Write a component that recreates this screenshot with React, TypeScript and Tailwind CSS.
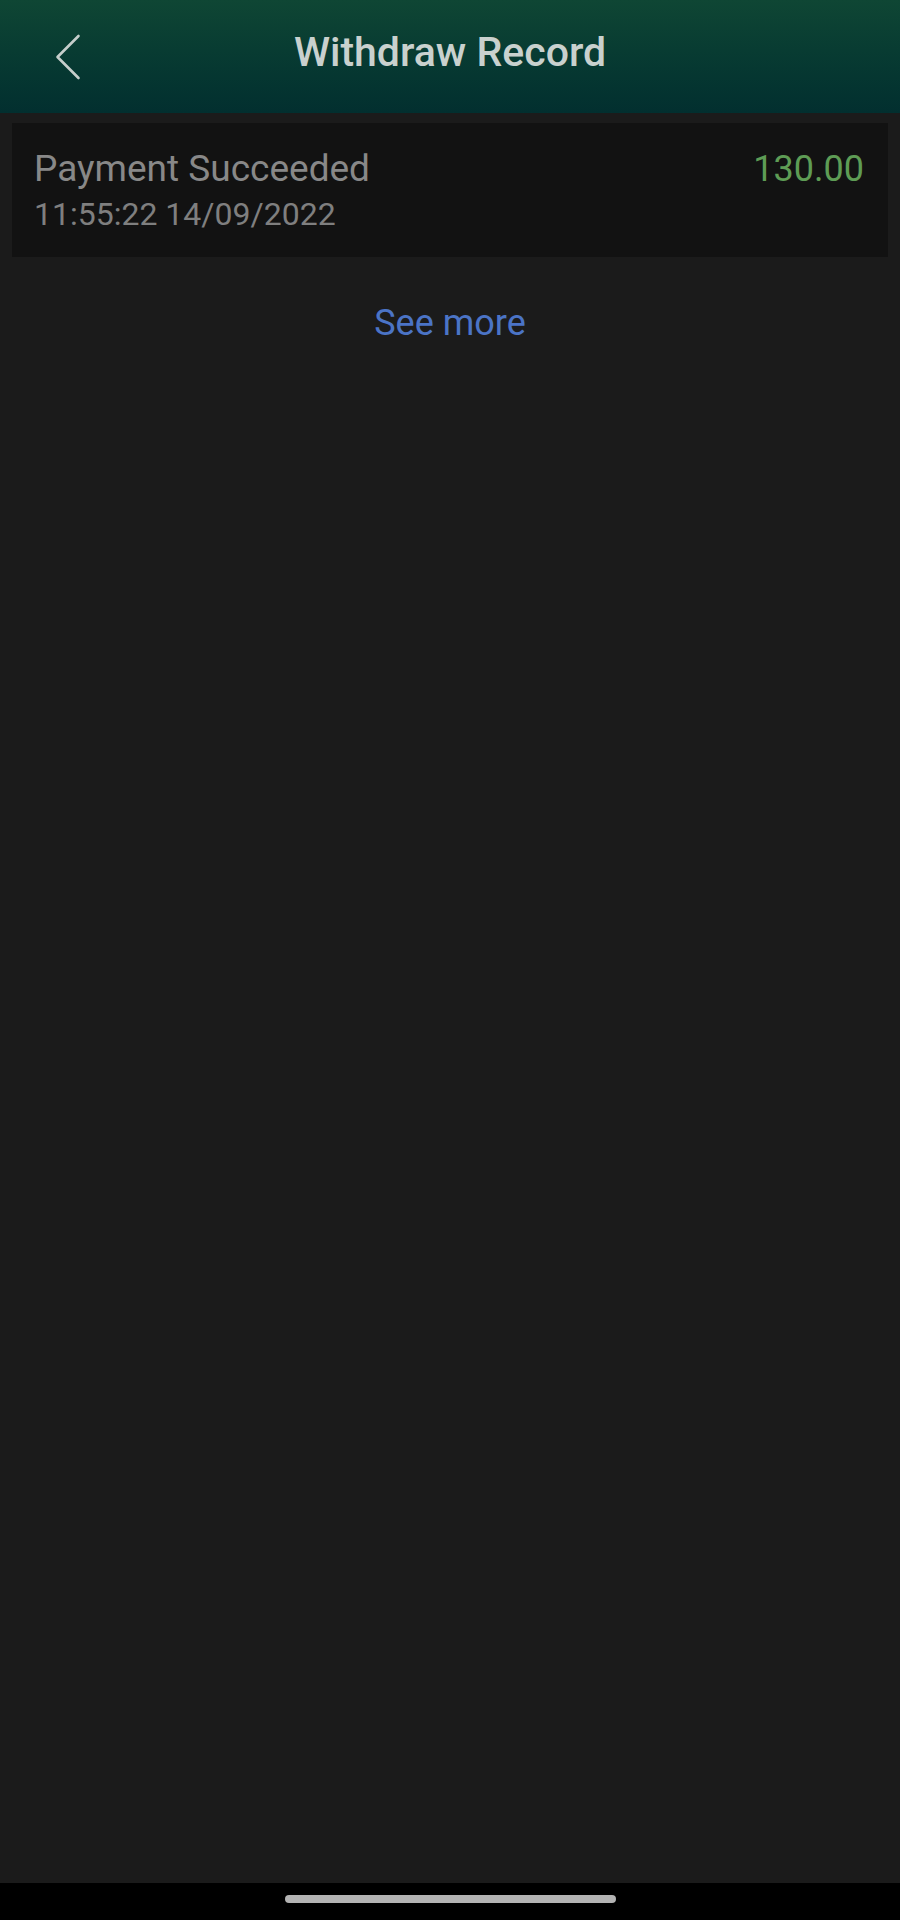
function BackIcon(): React.JSX.Element {
  return (
    <svg width="26" height="46" viewBox="0 0 26 46" fill="none" aria-hidden="true">
      <polyline points="23.5,2 2.5,23 23.5,44" stroke="#c6cecb" strokeWidth="2.6" strokeLinecap="round" strokeLinejoin="round" />
    </svg>
  );
}

function Header(): React.JSX.Element {
  return (
    <header className="grid h-[113px] grid-cols-[1fr_auto_1fr] items-center bg-gradient-to-b from-[#0f4634] to-[#022f2f]">
      <div className="pl-[55px]">
        <BackIcon />
      </div>
      <h1 className="pb-[10px] text-[41px] font-medium leading-[48px] text-[#c9d1ce]">Withdraw Record</h1>
      <div />
    </header>
  );
}

function RecordCard({ status, time, amount }: { status: string; time: string; amount: string }): React.JSX.Element {
  return (
    <div className="mx-[12px] flex h-[134px] items-start justify-between bg-[#121212] pl-[22px] pr-[24px] pt-[25px]">
      <div>
        <p className="text-[37px] leading-[42px] text-[#888888]">{status}</p>
        <p className="mt-[5px] text-[32px] leading-[38px] text-[#7f7f7f]">{time}</p>
      </div>
      <span className="text-[36px] leading-[42px] text-[#5e9c55]">{amount}</span>
    </div>
  );
}

export default function App(): React.JSX.Element {
  return (
    <div className="flex min-h-[1920px] flex-col bg-[#1b1b1b]" style={{ fontFamily: "Roboto, 'Noto Sans', sans-serif" }}>
      <Header />
      <main className="flex-1 pt-[10px]">
        <RecordCard status="Payment Succeeded" time="11:55:22 14/09/2022" amount="130.00" />
        <p className="mt-[45px] text-center text-[36px] leading-[42px] text-[#4b74c6]">See more</p>
      </main>
      <footer className="flex h-[37px] justify-center bg-black pt-[12px]">
        <div className="h-[8px] w-[331px] rounded-full bg-[#b3b3b3]" />
      </footer>
    </div>
  );
}
